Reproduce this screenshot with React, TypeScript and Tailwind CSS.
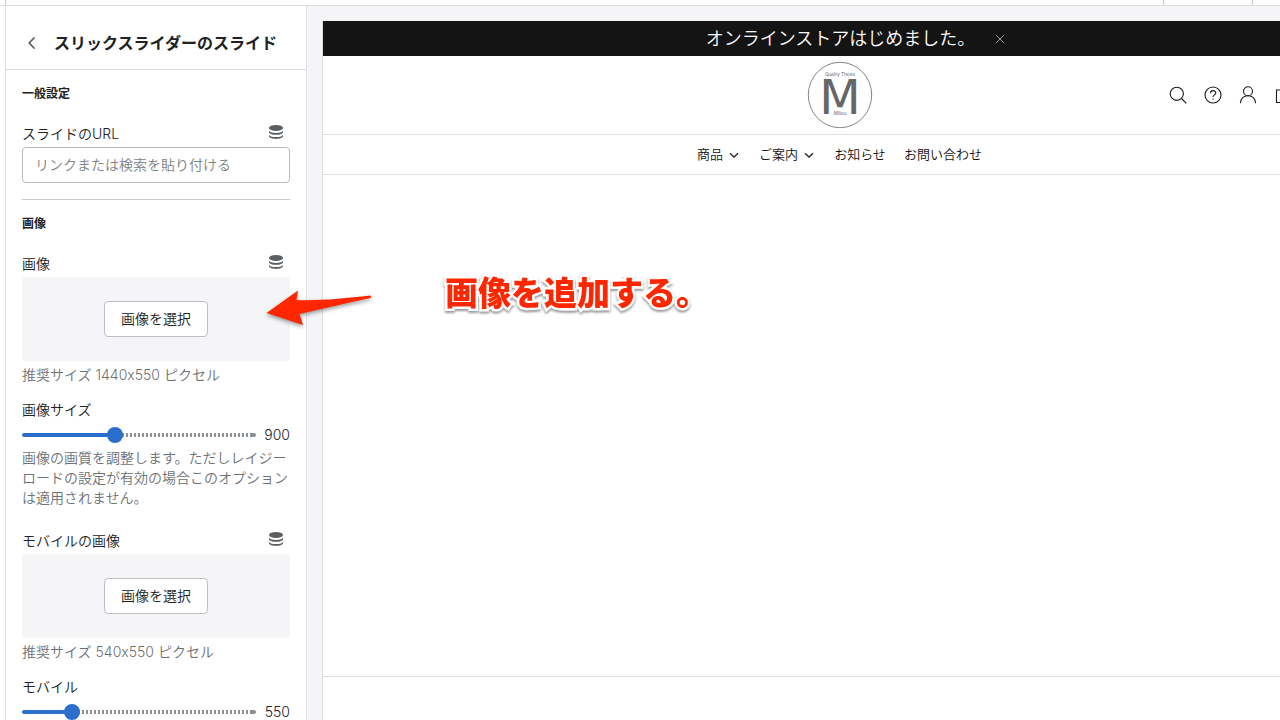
import React, { useId, useState } from "react";

function DatabaseIcon() {
  return (
    <svg viewBox="0 0 20 20" className="size-5 text-[#5c5f62]" fill="currentColor" aria-hidden="true">
      <ellipse cx="10" cy="5.900" rx="7" ry="3" />
      <path d="M3 8.800c1 1.600 4 2.200 7 2.200s6-.6 7-2.200v1.200c0 1.900-3.100 2.800-7 2.800S3 11.900 3 10z" />
      <path d="M3 12.900c1 1.600 4 2.200 7 2.200s6-.6 7-2.200v1.200c0 1.900-3.100 2.800-7 2.800S3 16 3 14.100z" />
    </svg>
  );
}

function SourceButton() {
  return (
    <button type="button" aria-label="動的ソースを接続" className="mr-1 -mt-0.5">
      <DatabaseIcon />
    </button>
  );
}

function ImagePicker({ label, hint }: { label: string; hint: string }) {
  const id = useId();
  return (
    <div>
      <div className="flex h-[23px] items-start justify-between">
        <label htmlFor={id}>{label}</label>
        <SourceButton />
      </div>
      <div className="flex h-[84px] items-center justify-center rounded bg-[#f5f5f8]">
        <button
          id={id}
          type="button"
          className="h-9 rounded border border-[#babfc3] bg-white px-4 text-[#202223]"
        >
          画像を選択
        </button>
      </div>
      <p className="mt-1 text-[#6d7175]">{hint}</p>
    </div>
  );
}

const MIN = 200;
const MAX = 2000;

function RangeField({ label, initial, hint }: { label: string; initial: number; hint?: string }) {
  const id = useId();
  const [value, setValue] = useState(initial);
  const ratio = (value - MIN) / (MAX - MIN);
  return (
    <div>
      <label htmlFor={id} className="block">
        {label}
      </label>
      <div className="mt-[3px] flex h-6 items-center">
        <div className="grid flex-1 items-center">
          <div className="col-start-1 row-start-1 flex h-1 overflow-hidden rounded-full">
            <div className="bg-[#2c6ecb]" style={{ width: `calc(8px + (100% - 16px) * ${ratio})` }} />
            <div className="flex-1 bg-[repeating-linear-gradient(to_left,#8c9196_0_2px,#ffffff_2px_4px)]" />
            <div className="w-1 bg-[#8c9196]" />
          </div>
          <input
            id={id}
            type="range"
            min={MIN}
            max={MAX}
            step={50}
            value={value}
            onChange={(e) => setValue(Number(e.target.value))}
            className="col-start-1 row-start-1 h-4 w-full appearance-none bg-transparent [&::-webkit-slider-thumb]:size-4 [&::-webkit-slider-thumb]:appearance-none [&::-webkit-slider-thumb]:rounded-full [&::-webkit-slider-thumb]:bg-[#2c6ecb]"
          />
        </div>
        <output htmlFor={id} className="w-[34px] text-right">{value}</output>
      </div>
      {hint && <p className="mt-px text-[#6d7175]">{hint}</p>}
    </div>
  );
}

function Sidebar() {
  return (
    <aside className="w-[302px] shrink-0 border-x border-[#dcdee1] bg-white">
      <header className="flex h-16 items-center border-b border-[#dcdee1] pt-2.5 pl-4">
        <button type="button" aria-label="戻る" className="flex size-5 items-center justify-center">
          <svg viewBox="0 0 20 20" className="size-5" fill="none" stroke="#5c5f62" strokeWidth="1.800" strokeLinecap="round" strokeLinejoin="round">
            <path d="M12 5 7.200 10l4.800 5" />
          </svg>
        </button>
        <h1 className="ml-3 text-base font-semibold text-[#202223]">スリックスライダーのスライド</h1>
      </header>
      <form className="px-4 pt-3.5 text-sm leading-5 font-[350] text-[#202223]">
        <h2 className="text-xs leading-5 font-bold text-[#202223]">一般設定</h2>
        <div className="mt-5">
          <div className="flex h-[23px] items-start justify-between">
            <label htmlFor="slide-url">スライドのURL</label>
            <SourceButton />
          </div>
          <input
            id="slide-url"
            type="text"
            placeholder="リンクまたは検索を貼り付ける"
            className="block h-9 w-full rounded border border-[#b5b9bd] px-3 pb-0.5 placeholder:text-[#7d8286]"
          />
        </div>
        <hr className="my-4 border-[#c9cccf]" />
        <h2 className="-mt-0.5 text-xs leading-5 font-bold text-[#202223]">画像</h2>
        <div className="mt-5">
          <ImagePicker label="画像" hint="推奨サイズ 1440x550 ピクセル" />
        </div>
        <div className="mt-[15px]">
          <RangeField
            label="画像サイズ"
            initial={900}
            hint="画像の画質を調整します。ただしレイジーロードの設定が有効の場合このオプションは適用されません。"
          />
        </div>
        <div className="mt-[23px]">
          <ImagePicker label="モバイルの画像" hint="推奨サイズ 540x550 ピクセル" />
        </div>
        <div className="mt-[15px]">
          <RangeField label="モバイル" initial={550} />
        </div>
      </form>
    </aside>
  );
}

function Logo() {
  return (
    <a href="#home" aria-label="ホーム" className="col-start-2">
      <svg viewBox="0 0 66 68" className="h-[68px] w-[66px]" textAnchor="middle" fill="#666666">
        <ellipse cx="33" cy="34" rx="31.700" ry="32.700" fill="none" stroke="#777777" strokeWidth="0.900" />
        <text x="33" y="14.500" fontSize="4.500" fontFamily="Inter, sans-serif">Quality Thesis</text>
        <text x="33" y="53" fontSize="48" fontFamily="DejaVu Sans, sans-serif">M</text>
        <text x="33" y="53.500" fontSize="4.500" fontFamily="Inter, sans-serif">Milieu</text>
      </svg>
    </a>
  );
}

function StoreIcon({ label, children }: { label: string; children: React.ReactNode }) {
  return (
    <button type="button" aria-label={label} className="shrink-0">
      <svg viewBox="0 0 20 20" className="size-5" fill="none" stroke="#1c1c1c" strokeWidth="1.100">
        {children}
      </svg>
    </button>
  );
}

function NavLink({ label, menu }: { label: string; menu?: boolean }) {
  return (
    <a href={`#${label}`} className="flex items-center gap-1.5">
      {label}
      {menu && (
        <svg viewBox="0 0 10 10" className="mr-0.5 size-2.5" fill="none" stroke="#222222" strokeWidth="1.300">
          <path d="M1 3.300 5 7l4-3.700" />
        </svg>
      )}
    </a>
  );
}

function Preview() {
  return (
    <main className="mt-[15px] -mr-[76px] ml-[15px] flex flex-1 flex-col self-stretch border-l border-[#dcdee1] bg-white">
      <div className="flex h-[35px] shrink-0 items-center justify-center bg-[#141414] text-white">
        <p className="ml-8 text-lg font-[350]">オンラインストアはじめました。</p>
        <button type="button" aria-label="閉じる" className="ml-5">
          <svg viewBox="0 0 10 10" className="size-2.5" stroke="#999999" strokeWidth="1">
            <path d="m1 1 8 8M9 1 1 9" />
          </svg>
        </button>
      </div>
      <header className="grid h-[79px] shrink-0 grid-cols-[1fr_auto_1fr] items-center border-b border-[#e0e0e0]">
        <Logo />
        <div className="flex justify-end gap-[15px] pr-[63px]">
          <StoreIcon label="検索">
            <circle cx="8.800" cy="8.800" r="6.600" />
            <path d="m13.500 13.500 4.800 4.800" />
          </StoreIcon>
          <StoreIcon label="ヘルプ">
            <circle cx="10" cy="10" r="8" />
            <path d="M7.500 8.300c0-3.600 5.300-3.400 5.300-.4 0 1.900-2.700 2-2.700 4" />
            <path d="M10.100 13.500v1.300" />
          </StoreIcon>
          <StoreIcon label="アカウント">
            <circle cx="10" cy="6.300" r="4.500" />
            <path d="M2.400 18.300c.4-4.600 3.200-7.500 7.600-7.500s7.200 2.900 7.600 7.500" />
          </StoreIcon>
          <StoreIcon label="カート">
            <path d="M3.500 5h14v12.500h-14zM7.500 5c0-4 6-4 6 0" />
          </StoreIcon>
        </div>
      </header>
      <nav className="flex h-10 shrink-0 items-center justify-center gap-[18px] border-b border-[#e0e0e0] text-[13px] font-[350] text-[#111111]">
        <NavLink label="商品" menu />
        <NavLink label="ご案内" menu />
        <NavLink label="お知らせ" />
        <NavLink label="お問い合わせ" />
      </nav>
      <section className="h-[502px] shrink-0 border-b border-[#e0e0e0]" />
    </main>
  );
}

function Annotation() {
  return (
    <div className="pointer-events-none absolute top-[271px] left-[262px] flex items-start">
      <svg viewBox="0 0 116 44" className="mt-[17px] h-11 w-[116px] drop-shadow-[0_2px_2px_rgba(0,0,0,0.4)]" fill="#ff2600">
        <path d="M4.500 25 36 2.500l-1.500 9.500C58 13 82 10.500 108.500 7.500q1.500 1.500 0 2.500C86 15 62 20 37.500 26L41 37Z" />
      </svg>
      <p className="ml-[67px] text-[33px] leading-[44px] font-black whitespace-nowrap text-[#ff2600] drop-shadow-[0_2px_1px_rgba(0,0,0,0.4)] [-webkit-text-stroke:5px_white] [paint-order:stroke_fill]">
        画像を追加する。
      </p>
    </div>
  );
}

export default function App() {
  return (
    <div
      lang="ja"
      className="relative flex h-screen flex-col overflow-hidden bg-[#f5f5f8] font-[Inter,'Noto_Sans_CJK_JP',sans-serif]"
    >
      <div className="flex h-1.5 shrink-0 border-b border-[#dcdee1] bg-white">
        <div className="w-1.5 border-r border-[#c9cccf]" />
        <div className="flex-1" />
        <div className="w-[90px] border-x border-[#c9cccf]" />
        <div className="w-[27px]" />
      </div>
      <div className="flex flex-1 items-start">
        <div className="w-[5px] shrink-0 self-stretch bg-white" />
        <Sidebar />
        <Preview />
      </div>
      <Annotation />
    </div>
  );
}
